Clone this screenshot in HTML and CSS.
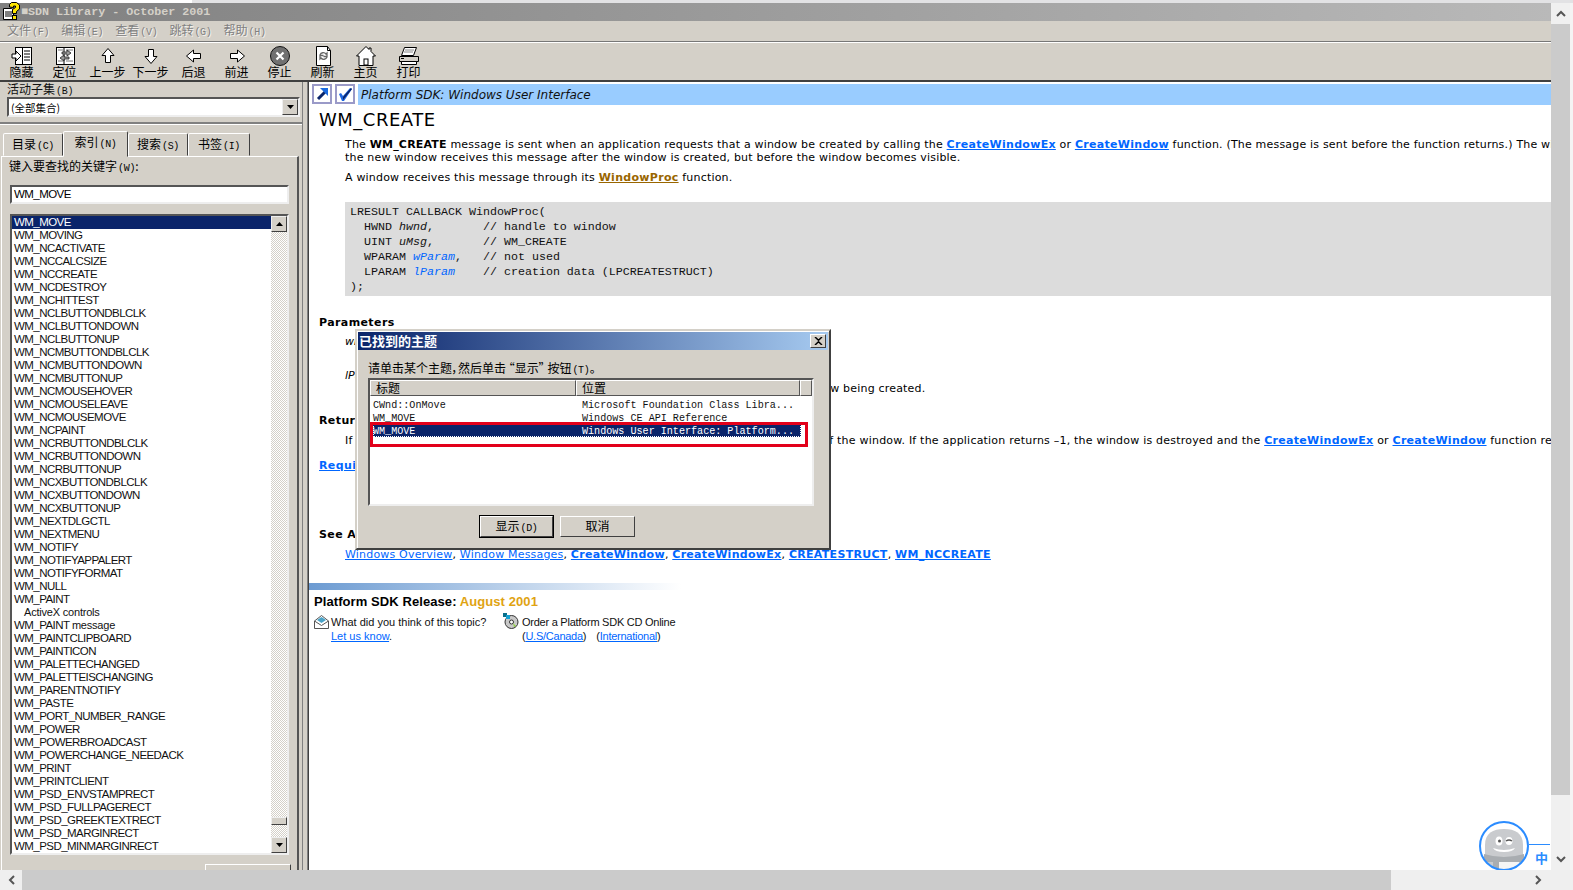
FILE: index.html
```html
<!DOCTYPE html>
<html lang="zh">
<head>
<meta charset="utf-8">
<title>MSDN Library - October 2001</title>
<link rel="stylesheet" href="styles.css">
</head>
<body>
<div class="screen">
  <div class="top-strip"></div>
  <div class="mid">
    <div class="window">
      <div class="titlebar">
        <svg class="app-icon" width="17" height="18" viewBox="0 0 17 18"><path d="M.5 6.500h8l2 2v9H.5z" fill="#fff" stroke="#000"/><path d="M2 10h7M2 12h7M2 14h7" stroke="#000"/><path d="M6.500 5V2.500l2-2h5l3 2.500v4l-3 2.500v2h-4V7.500l3-2V4h-2v1.500z" fill="#ffe600" stroke="#000"/><rect x="9.500" y="13.500" width="4" height="4" fill="#ffe600" stroke="#000"/></svg>
        <span class="title-text">■SDN Library - October 2001</span>
      </div>
      <div class="menubar">
        <span class="menu-item">文件<i>(F)</i></span>
        <span class="menu-item">编辑<i>(E)</i></span>
        <span class="menu-item">查看<i>(V)</i></span>
        <span class="menu-item">跳转<i>(G)</i></span>
        <span class="menu-item">帮助<i>(H)</i></span>
      </div>
      <div class="toolbar">
        <div class="tool">
          <svg width="22" height="20" viewBox="0 0 22 20"><rect x="4.500" y="1.500" width="16" height="17" fill="#fff" stroke="#000"/><path d="M11.500 2v16M13 5h6M13 8h6M13 11h6M13 14h6" stroke="#000"/><path d="M1 8h4V5l5 5-5 5v-3H1z" fill="#fff" stroke="#000"/></svg>
          <span>隐藏</span>
        </div>
        <div class="tool">
          <svg width="22" height="20" viewBox="0 0 22 20"><rect x="2.500" y="1.500" width="18" height="17" fill="#fff" stroke="#000"/><path d="M10 2v16" stroke="#000"/><path d="M4 4h5M4 15h5M12 4h7M12 15h7" stroke="#777"/><path d="M8 6h5V4l4 3-4 3V8H8z" fill="#999" stroke="#222" stroke-width=".8"/><path d="M15 11h-5V9l-4 3 4 3v-2h5z" fill="#999" stroke="#222" stroke-width=".8"/></svg>
          <span>定位</span>
        </div>
        <div class="tool">
          <svg width="22" height="20" viewBox="0 0 22 20"><path d="M11 2.500l6 7h-3.500v7h-5v-7H5z" fill="#fff" stroke="#000"/></svg>
          <span>上一步</span>
        </div>
        <div class="tool">
          <svg width="22" height="20" viewBox="0 0 22 20"><path d="M11 17.500l6-7h-3.500v-7h-5v7H5z" fill="#fff" stroke="#000"/></svg>
          <span>下一步</span>
        </div>
        <div class="tool">
          <svg width="22" height="20" viewBox="0 0 22 20"><path d="M3.500 10l7-6v3.500h7v5h-7V16z" fill="#fff" stroke="#000"/></svg>
          <span>后退</span>
        </div>
        <div class="tool">
          <svg width="22" height="20" viewBox="0 0 22 20"><path d="M18.500 10l-7-6v3.500h-7v5h7V16z" fill="#fff" stroke="#000"/></svg>
          <span>前进</span>
        </div>
        <div class="tool">
          <svg width="22" height="20" viewBox="0 0 22 20"><circle cx="11" cy="10" r="9.500" fill="#707070" stroke="#111"/><path d="M7.500 6.500l7 7M14.500 6.500l-7 7" stroke="#fff" stroke-width="2.200"/></svg>
          <span>停止</span>
        </div>
        <div class="tool">
          <svg width="22" height="20" viewBox="0 0 22 20"><path d="M4.500.5h11l3 4v15h-14z" fill="#fff" stroke="#000"/><path d="M15.500.5v4h3" fill="none" stroke="#000"/><path d="M8 9a3.500 3.500 0 0 1 6-1l1-1v3.500h-3.500M15 11a3.500 3.500 0 0 1-6 1l-1 1v-3.500h3.500" fill="none" stroke="#666" stroke-width="1.300"/></svg>
          <span>刷新</span>
        </div>
        <div class="tool">
          <svg width="22" height="20" viewBox="0 0 22 20"><path d="M11 .5L1.500 10H4v9.500h14V10h2.500L16 5.500V2h-2v1.500z" fill="#fff" stroke="#000"/><rect x="9" y="13" width="4" height="6" fill="#fff" stroke="#000"/></svg>
          <span>主页</span>
        </div>
        <div class="tool">
          <svg width="22" height="20" viewBox="0 0 22 20"><path d="M6.500 1.500h12l-3 8h-12z" fill="#fff" stroke="#000"/><path d="M7 4h9M6 6h9" stroke="#888"/><path d="M1.500 10.500h19v5h-19z" fill="#d4d0c8" stroke="#000"/><path d="M3.500 15.500h15v3h-15z" fill="#fff" stroke="#000"/><path d="M3 12.500h3" stroke="#000"/></svg>
          <span>打印</span>
        </div>
      </div>
      <div class="panes">
        <aside class="left-pane">
          <div class="field-label">活动子集<i>(B)</i></div>
          <div class="combo">
            <span class="combo-text">(全部集合)</span>
            <span class="scroll-btn"><svg width="7" height="4" viewBox="0 0 7 4"><path d="M0 0h7L3.500 4z" fill="#000"/></svg></span>
          </div>
          <div class="hr"></div>
          <div class="tabs">
            <span class="tab tab-1">目录<i>(C)</i></span>
            <span class="tab tab-2 active">索引<i>(N)</i></span>
            <span class="tab tab-3">搜索<i>(S)</i></span>
            <span class="tab tab-4">书签<i>(I)</i></span>
          </div>
          <div class="tab-panel">
            <div class="keyword-label">键入要查找的关键字<i>(W)</i>:</div>
            <div class="keyword-input">WM_MOVE</div>
            <div class="index-list">
              <ul class="index-rows">
                <li class="selected">WM_MOVE</li>
                <li>WM_MOVING</li>
                <li>WM_NCACTIVATE</li>
                <li>WM_NCCALCSIZE</li>
                <li>WM_NCCREATE</li>
                <li>WM_NCDESTROY</li>
                <li>WM_NCHITTEST</li>
                <li>WM_NCLBUTTONDBLCLK</li>
                <li>WM_NCLBUTTONDOWN</li>
                <li>WM_NCLBUTTONUP</li>
                <li>WM_NCMBUTTONDBLCLK</li>
                <li>WM_NCMBUTTONDOWN</li>
                <li>WM_NCMBUTTONUP</li>
                <li>WM_NCMOUSEHOVER</li>
                <li>WM_NCMOUSELEAVE</li>
                <li>WM_NCMOUSEMOVE</li>
                <li>WM_NCPAINT</li>
                <li>WM_NCRBUTTONDBLCLK</li>
                <li>WM_NCRBUTTONDOWN</li>
                <li>WM_NCRBUTTONUP</li>
                <li>WM_NCXBUTTONDBLCLK</li>
                <li>WM_NCXBUTTONDOWN</li>
                <li>WM_NCXBUTTONUP</li>
                <li>WM_NEXTDLGCTL</li>
                <li>WM_NEXTMENU</li>
                <li>WM_NOTIFY</li>
                <li>WM_NOTIFYAPPALERT</li>
                <li>WM_NOTIFYFORMAT</li>
                <li>WM_NULL</li>
                <li>WM_PAINT</li>
                <li class="sub">ActiveX controls</li>
                <li>WM_PAINT <small>message</small></li>
                <li>WM_PAINTCLIPBOARD</li>
                <li>WM_PAINTICON</li>
                <li>WM_PALETTECHANGED</li>
                <li>WM_PALETTEISCHANGING</li>
                <li>WM_PARENTNOTIFY</li>
                <li>WM_PASTE</li>
                <li>WM_PORT_NUMBER_RANGE</li>
                <li>WM_POWER</li>
                <li>WM_POWERBROADCAST</li>
                <li>WM_POWERCHANGE_NEEDACK</li>
                <li>WM_PRINT</li>
                <li>WM_PRINTCLIENT</li>
                <li>WM_PSD_ENVSTAMPRECT</li>
                <li>WM_PSD_FULLPAGERECT</li>
                <li>WM_PSD_GREEKTEXTRECT</li>
                <li>WM_PSD_MARGINRECT</li>
                <li>WM_PSD_MINMARGINRECT</li>
              </ul>
              <div class="list-scroll">
                <span class="scroll-btn"><svg width="7" height="4" viewBox="0 0 7 4"><path d="M0 4h7L3.500 0z" fill="#000"/></svg></span>
                <span class="track"></span>
                <span class="thumb"></span>
                <span class="track track-end"></span>
                <span class="scroll-btn"><svg width="7" height="4" viewBox="0 0 7 4"><path d="M0 0h7L3.500 4z" fill="#000"/></svg></span>
              </div>
            </div>
            <div class="show-row"><span class="show-btn">显示<i>(D)</i></span></div>
          </div>
        </aside>
        <div class="splitter"></div>
        <main class="doc">
          <div class="banner-row">
            <span class="banner-btn"><svg width="14" height="14" viewBox="0 0 14 14"><path d="M3 12l7-7" stroke="#0a246a" stroke-width="3"/><path d="M5 1h8v8z" fill="#1a6ae0"/></svg></span>
            <span class="banner-btn"><svg width="14" height="14" viewBox="0 0 14 14"><path d="M1 7l2-1 2 3 7-8 2 1-8 12H4z" fill="#1e66e0"/><path d="M5 13l9-11-1-1-8 9z" fill="#0a246a"/></svg></span>
            <div class="banner">Platform SDK: Windows User Interface</div>
          </div>
          <h1 class="doc-title">WM_CREATE</h1>
          <p class="para para-1">The <b>WM_CREATE</b> message is sent when an application requests that a window be created by calling the <a class="link-b" href="#">CreateWindowEx</a> or <a class="link-b" href="#">CreateWindow</a> function. (The message is sent before the function returns.) The window procedure of<br>the new window receives this message after the window is created, but before the window becomes visible.</p>
          <p class="para para-2">A window receives this message through its <a class="link-b link-visited" href="#">WindowProc</a> function.</p>
          <pre class="code"><span>LRESULT CALLBACK WindowProc(</span>
<span>  HWND </span><em>hwnd</em><span>,       // handle to window</span>
<span>  UINT </span><em>uMsg</em><span>,       // WM_CREATE</span>
<span>  WPARAM </span><em class="param">wParam</em><span>,   // not used</span>
<span>  LPARAM </span><em class="param">lParam</em><span>    // creation data (LPCREATESTRUCT)</span>
<span>);</span></pre>
          <h4 class="section section-params">Parameters</h4>
          <p class="term term-w"><em>wParam</em></p>
          <p class="term term-l"><em>lParam</em></p>
          <p class="para term-desc">Pointer to a CREATESTRUCT structure that contains information about the window being created.</p>
          <h4 class="section section-return">Return Value</h4>
          <p class="para para-return">If an application processes this message, it should return zero to continue creation of the window. If the application returns –1, the window is destroyed and the <a class="link-b" href="#">CreateWindowEx</a> or <a class="link-b" href="#">CreateWindow</a> function returns a NULL handle.</p>
          <h4 class="section section-req"><a href="#">Requirements</a></h4>
          <h4 class="section section-see">See Also</h4>
          <p class="para para-see"><a href="#">Windows Overview</a>, <a href="#">Window Messages</a>, <a class="link-b" href="#">CreateWindow</a>, <a class="link-b" href="#">CreateWindowEx</a>, <a class="link-b" href="#">CREATESTRUCT</a>, <a class="link-b" href="#">WM_NCCREATE</a></p>
          <div class="rule"></div>
          <div class="release">Platform SDK Release: <span>August 2001</span></div>
          <div class="feedback">
            <div class="fb-col fb-col-1">
              <svg width="15" height="14" viewBox="0 0 15 14"><path d="M.5 6L7.500.5 14.500 6v7.500H.5z" fill="#fff" stroke="#555"/><path d="M3 5l4.500-3L12 5l-4.500 3z" fill="#4aa3c8"/><path d="M.5 6l7 4.500 7-4.500" fill="none" stroke="#555"/></svg>
              <div>What did you think of this topic?<br><a href="#">Let us know</a>.</div>
            </div>
            <div class="fb-col fb-col-2">
              <svg width="17" height="17" viewBox="0 0 17 17"><circle cx="9.500" cy="10" r="6.500" fill="#c8c8c8" stroke="#333"/><circle cx="9.500" cy="10" r="2" fill="#fff" stroke="#333"/><path d="M11 11l3 3-2 1z" fill="#8fd13f"/><rect x="1" y="1" width="4" height="4" fill="#0a6e8a"/><rect x="4" y="3" width="4" height="4" fill="#15a0d0"/></svg>
              <div>Order a Platform SDK CD Online<br>(<a href="#">U.S/Canada</a>)<span class="fb-gap"></span>(<a href="#">International</a>)</div>
            </div>
          </div>
        </main>
      </div>
    </div>
    <div class="vbar">
      <span class="vbar-btn"><svg width="10" height="7" viewBox="0 0 10 7"><path d="M1 6l4-4 4 4" fill="none" stroke="#555" stroke-width="2"/></svg></span>
      <span class="vbar-thumb"></span>
      <span class="vbar-end"><svg width="10" height="7" viewBox="0 0 10 7"><path d="M1 1l4 4 4-4" fill="none" stroke="#555" stroke-width="2"/></svg></span>
    </div>
  </div>
  <div class="hbar">
    <span class="hbar-btn"><svg width="7" height="10" viewBox="0 0 7 10"><path d="M6 1L2 5l4 4" fill="none" stroke="#555" stroke-width="2"/></svg></span>
    <span class="hbar-thumb"></span>
    <span class="hbar-end"><svg width="7" height="10" viewBox="0 0 7 10"><path d="M1 1l4 4-4 4" fill="none" stroke="#555" stroke-width="2"/></svg></span>
  </div>

  <div class="dialog">
    <div class="dlg-title">
      <span>已找到的主题</span>
      <span class="dlg-close"><svg width="9" height="8" viewBox="0 0 9 8"><path d="M1 0l3.500 3.200L8 0M1 8l3.500-3.200L8 8" fill="none" stroke="#000" stroke-width="1.500"/></svg></span>
    </div>
    <div class="dlg-prompt">请单击某个主题，然后单击 “显示” 按钮<i>(T)</i>。</div>
    <div class="dlg-list">
      <div class="dlg-head">
        <span class="col-a">标题</span>
        <span class="col-b">位置</span>
        <span class="col-c"></span>
      </div>
      <div class="dlg-row"><span class="cell-a">CWnd::OnMove</span><span>Microsoft Foundation Class Libra...</span></div>
      <div class="dlg-row"><span class="cell-a">WM_MOVE</span><span>Windows CE API Reference</span></div>
      <div class="dlg-row dlg-selected"><span class="cell-a">WM_MOVE</span><span>Windows User Interface: Platform...</span></div>
      <div class="red-box"></div>
    </div>
    <div class="dlg-buttons">
      <span class="dlg-btn dlg-default">显示<i>(D)</i></span>
      <span class="dlg-btn">取消</span>
    </div>
  </div>

  <div class="ime">
    <svg class="ime-face" width="50" height="50" viewBox="0 0 50 50"><defs><clipPath id="c"><circle cx="25" cy="25" r="23.500"/></clipPath></defs><circle cx="25" cy="25" r="24" fill="#fff"/><g clip-path="url(#c)"><path d="M6 50V24C6 12 14 8 25 8s19 4 19 16v26z" fill="#c9cbce"/><path d="M5 33q20 6 40 0v8H5z" fill="#a9adb1"/><rect x="14" y="38" width="6" height="12" fill="#a9adb1"/><rect x="20" y="41" width="20" height="9" fill="#f5f5f5"/><path d="M14 27q11 4 22 0q-2 4-11 4t-11-4z" fill="#fff"/><ellipse cx="20" cy="20" rx="3.500" ry="4.500" fill="#fff"/><circle cx="20.500" cy="20" r="1.500" fill="#555"/><ellipse cx="30" cy="20" rx="3.500" ry="4" fill="#fff"/><path d="M27 20q3-2 6 0" stroke="#555" fill="none" stroke-width="1.500"/></g><circle cx="25" cy="25" r="24" fill="none" stroke="#2b8cff" stroke-width="2"/></svg>
    <span class="ime-line"></span>
    <span class="ime-text">中</span>
  </div>
</div>
</body>
</html>
```

FILE: styles.css
```css
* { box-sizing: border-box; }
html, body { margin: 0; padding: 0; background: #fff; }
body { font-family: "Liberation Sans", "Noto Sans CJK SC", sans-serif; font-size: 12px; color: #000; }
i { font-style: normal; font-family: "Liberation Mono", monospace; font-size: 10px; letter-spacing: -.3px; margin-left: 1px; }
ul { list-style: none; margin: 0; padding: 0; }
p, h1, h4, pre { margin: 0; }
a { color: #0066ff; text-decoration: underline; }

.screen { width: 1573px; height: 890px; position: relative; overflow: hidden; display: flex; flex-direction: column; }
.top-strip { height: 3px; background: linear-gradient(90deg, #fff 192px, #e2e2e4 192px); flex: none; }
.mid { flex: 1; display: flex; min-height: 0; }
.window { width: 1551px; flex: none; display: flex; flex-direction: column; background: #d4d0c8; min-height: 0; }

.titlebar { height: 18px; flex: none; display: flex; align-items: center; background: linear-gradient(90deg, #808080, #b9b9b9); padding-left: 3px; }
.app-icon { margin-top: -2px; }
.title-text { font-family: "Liberation Mono", monospace; font-weight: 700; font-size: 11.700px; line-height: 17px; padding-top: 1px; color: #d4d0c8; margin-left: 1px; }

.menubar { height: 20px; flex: none; display: flex; padding: 0 0 3px 7px; gap: 12px; align-items: center; font-family: "Noto Sans CJK SC", sans-serif; font-size: 12px; color: #808080; text-shadow: 1px 1px 0 #f4f2ee; }
.menu-item { white-space: nowrap; }

.toolbar { height: 41px; flex: none; display: flex; border-top: 1px solid #777; box-shadow: inset 0 1px 0 #fff; border-bottom: 2px solid #404040; padding-top: 4px; }
.tool { width: 43px; height: 36px; display: flex; flex-direction: column; align-items: center; font-family: "Noto Sans CJK SC", sans-serif; font-size: 12px; line-height: 14px; white-space: nowrap; }
.tool svg { flex: none; height: 20px; margin-bottom: -1px; }

.panes { flex: 1; display: flex; min-height: 0; }
.left-pane { width: 303px; flex: none; overflow: hidden; position: relative; border-right: 1px solid #808080; font-family: "Liberation Sans", "Noto Sans CJK SC", sans-serif; }
.field-label { height: 15px; padding-left: 7px; font-family: "Noto Sans CJK SC", sans-serif; font-size: 12px; line-height: 14px; color: #111; }
.combo { margin: 0 0 0 7px; width: 293px; height: 20px; display: flex; justify-content: space-between; background: #fff; border: 2px solid; border-color: #555 #eee #eee #555; }
.combo-text { font-family: "Noto Sans CJK SC", sans-serif; font-size: 10.500px; line-height: 18px; padding-left: 2px; }
.scroll-btn { width: 16px; height: 16px; flex: none; display: flex; align-items: center; justify-content: center; background: #d4d0c8; border: 1px solid; border-color: #eee #404040 #404040 #eee; }
.hr { height: 2px; margin-top: 5px; background: #808080; border-bottom: 1px solid #fff; box-sizing: content-box; }
.tabs { display: flex; height: 25px; margin-top: 6px; align-items: flex-end; padding-left: 3px; position: relative; z-index: 1; }
.tab { height: 23px; font-family: "Noto Sans CJK SC", sans-serif; font-size: 12px; line-height: 19px; text-align: center; border: 1px solid; border-color: #fff #404040 transparent #fff; border-radius: 2px 2px 0 0; background: #d4d0c8; white-space: nowrap; }
.tab-1 { width: 60px; }
.tab-2 { width: 65px; }
.tab-3 { width: 60px; }
.tab-4 { width: 62px; }
.tab.active { height: 26px; margin-bottom: -1px; line-height: 20px; }
.tab-panel { width: 298px; height: 720px; margin-left: 1px; border-top: 1px solid #fff; border-left: 1px solid #fff; border-right: 2px solid #555; padding: 2px 0 0 7px; }
.keyword-label { height: 14px; font-family: "Noto Sans CJK SC", sans-serif; font-size: 12px; line-height: 14px; }
.keyword-input { margin: 12px 0 0 1px; width: 279px; height: 19px; background: #fff; border: 2px solid; border-color: #555 #eee #eee #555; font-size: 11.500px; letter-spacing: -.55px; line-height: 15px; padding-left: 2px; }
.index-list { margin: 10px 0 0 1px; width: 279px; height: 641px; background: #fff; border: 2px solid; border-color: #555 #eee #eee #555; display: flex; }
.index-rows { flex: 1; font-size: 11.500px; line-height: 13px; white-space: nowrap; min-width: 0; }
.index-rows li { height: 13px; padding-left: 2px; color: #111; letter-spacing: -.55px; }
.index-rows li.selected { background: #0a246a; color: #fff; }
.index-rows li.sub { padding-left: 12px; font-size: 11px; letter-spacing: -.2px; }
.index-rows small { font-size: 11px; letter-spacing: -.2px; }
.list-scroll { width: 16px; flex: none; display: flex; flex-direction: column; }
.track { flex: 1; background-color: #e9e7e3; background-image: repeating-conic-gradient(#d4d0c8 0 25%, #fff 0 50%); background-size: 2px 2px; }
.track-end { flex: none; height: 12px; }
.thumb { height: 8px; flex: none; background: #d4d0c8; border: 1px solid; border-color: #eee #404040 #404040 #eee; }
.show-row { display: flex; justify-content: flex-end; padding-right: 6px; margin-top: 9px; }
.show-btn { width: 86px; height: 24px; background: #d4d0c8; border: 1px solid; border-color: #fff #404040 #404040 #fff; font-family: "Noto Sans CJK SC", sans-serif; font-size: 12px; line-height: 20px; text-align: center; }
.splitter { width: 5px; flex: none; background: #d4d0c8; border-right: 1px solid #808080; }

.doc { flex: 1; min-width: 0; background: #fff; overflow: hidden; border-left: 1px solid #404040; white-space: nowrap; font-family: "DejaVu Sans", sans-serif; font-size: 11px; line-height: 13px; padding-top: 2px; }
.banner-row { display: flex; height: 21px; align-items: stretch; padding-left: 3px; }
.banner-btn { width: 20px; height: 20px; flex: none; margin-right: 3px; display: flex; align-items: center; justify-content: center; background: #fff; border: 2px solid #9a9ac8; }
.banner { flex: 1; background: #99ccff; font-style: italic; font-size: 12px; line-height: 21px; padding: 1px 0 0 3px; color: #111; }
.doc-title { font-weight: 400; font-size: 18px; line-height: 24px; margin: 3px 0 -2px 10px; letter-spacing: .5px; }
.para { padding-left: 36px; letter-spacing: .19px; }
.para-1 { margin-top: 8px; }
.para-2 { margin-top: 7px; }
.code { margin: 18px 0 0 36px; height: 94px; background: #dcdcdc; padding: 3px 0 0 5px; font-family: "Liberation Mono", monospace; font-size: 11.670px; line-height: 15px; color: #111; }
.code em { font-style: italic; }
.code .param { color: #0066ff; }
.section { font-size: 11px; font-weight: 700; padding-left: 10px; letter-spacing: .4px; }
.section-params { margin-top: 20px; }
.term { padding-left: 36px; }
.term-w { margin-top: 6px; }
.term-l { margin-top: 21px; }
.term-desc { padding-left: 64px; margin-top: 0; }
.section-return { margin-top: 19px; }
.para-return { margin-top: 7px; letter-spacing: .21px; }
.section-req { margin-top: 12px; }
.section-see { margin-top: 56px; }
.para-see { margin-top: 7px; }
.link-b { font-weight: 700; letter-spacing: .3px; }
.link-visited { color: #996600; }
.rule { height: 7px; margin-top: 22px; width: 372px; background: linear-gradient(90deg, #6c9bd2, #fff); }
.release { font-family: "Liberation Sans", sans-serif; font-weight: 700; font-size: 13px; line-height: 14px; margin: 5px 0 0 5px; letter-spacing: .08px; }
.release span { color: #dfa312; }
.feedback { display: flex; margin-top: 6px; padding-left: 5px; font-family: "Liberation Sans", sans-serif; font-size: 11px; line-height: 14px; color: #111; }
.fb-col { display: flex; gap: 2px; }
.fb-col-1 { width: 188px; }
.fb-col-2 { gap: 3px; margin-top: -3px; letter-spacing: -.25px; }
.fb-col-2 > div { padding-top: 3px; }
.fb-gap { display: inline-block; width: 10px; }

.vbar { width: 22px; flex: none; background: #f0f0f0; display: flex; flex-direction: column; border-right: 3px solid #f4f4f4; }
.vbar-btn { height: 21px; flex: none; display: flex; align-items: center; justify-content: center; }
.vbar-thumb { height: 771px; flex: none; background: #cbcbcb; }
.vbar-end { flex: 1; display: flex; align-items: flex-end; justify-content: center; padding-bottom: 7px; }

.hbar { height: 20px; flex: none; background: #efefef; display: flex; }
.hbar-btn { width: 22px; flex: none; display: flex; align-items: center; justify-content: center; }
.hbar-thumb { width: 1369px; flex: none; background: #cbcbcb; }
.hbar-end { flex: 1; display: flex; align-items: center; justify-content: flex-end; padding-right: 31px; }

.dialog { position: absolute; left: 355px; top: 329px; width: 476px; height: 221px; background: #d4d0c8; border: 2px solid; border-color: #d4d0c8 #404040 #404040 #d4d0c8; box-shadow: inset 1px 1px 0 #fff; padding: 1px 1px 0 1px; display: flex; flex-direction: column; }
.dlg-title { height: 18px; flex: none; background: linear-gradient(90deg, #0a246a, #a6caf0); display: flex; justify-content: space-between; align-items: center; padding: 0 2px 0 1px; color: #fff; font-family: "Noto Sans CJK SC", sans-serif; font-weight: 700; font-size: 13px; line-height: 16px; }
.dlg-close { width: 16px; height: 14px; display: flex; align-items: center; justify-content: center; background: #d4d0c8; border: 1px solid; border-color: #fff #404040 #404040 #fff; }
.dlg-prompt { margin: 11px 0 0 10px; height: 14px; font-family: "Noto Sans CJK SC", sans-serif; font-size: 12px; line-height: 14px; font-feature-settings: "palt"; white-space: nowrap; }
.dlg-list { position: relative; margin: 3px 0 0 10px; width: 446px; height: 128px; flex: none; background: #fff; border: 2px solid; border-color: #555 #eee #eee #555; font-family: "Liberation Mono", monospace; font-size: 10.100px; line-height: 13px; white-space: nowrap; }
.dlg-head { display: flex; height: 16px; margin-bottom: 2px; font-family: "Noto Sans CJK SC", sans-serif; font-size: 12px; line-height: 14px; }
.dlg-head span { background: #d4d0c8; border: 1px solid; border-color: #fff #555 #555 #fff; padding-left: 5px; }
.col-a { width: 206px; }
.col-b { width: 224px; }
.col-c { flex: 1; }
.dlg-row { display: flex; height: 13px; margin: 0 11px 0 3px; color: #111; padding-top: 1px; }
.cell-a { width: 209px; flex: none; }
.dlg-selected { background: #0a246a; color: #fff; outline: 1px dotted #fff; outline-offset: -1px; }
.red-box { position: absolute; left: 0; top: 42px; width: 438px; height: 25px; border: 3px solid #e2001a; }
.dlg-buttons { display: flex; gap: 7px; margin: 10px 0 0 122px; }
.dlg-btn { width: 75px; height: 21px; background: #d4d0c8; border: 1px solid; border-color: #fff #404040 #404040 #fff; font-family: "Noto Sans CJK SC", sans-serif; font-size: 12px; line-height: 18px; text-align: center; }
.dlg-default { width: 73px; outline: 1px solid #000; }

.ime { position: absolute; left: 1479px; top: 821px; width: 71px; height: 49px; overflow: hidden; }
.ime-face { display: block; }
.ime-line { position: absolute; left: 50px; top: 23px; width: 21px; height: 1px; background: #2b8cff; }
.ime-text { position: absolute; left: 56px; top: 28px; font-family: "Noto Sans CJK SC", sans-serif; font-weight: 700; font-size: 13px; line-height: 18px; color: #2b8cff; }
```
